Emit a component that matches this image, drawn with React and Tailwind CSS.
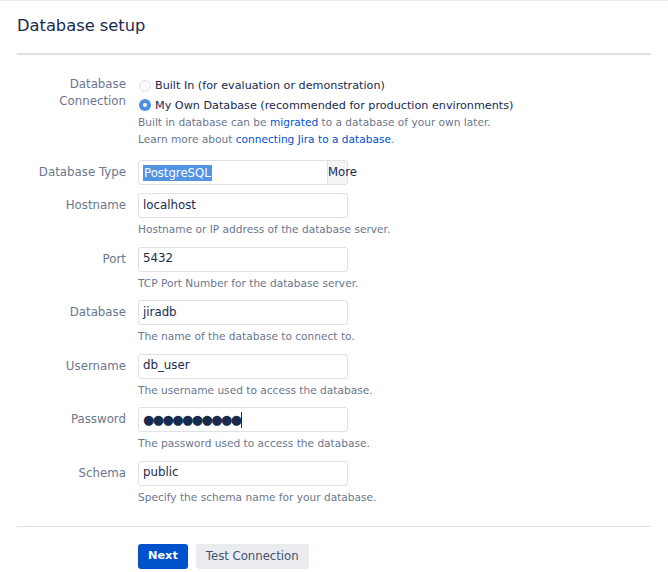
import React from "react";

const font = { fontFamily: '"DejaVu Sans", Verdana, sans-serif' };

function Field({ label, value, help, children }) {
  return (
    <div className="flex pb-[9.5px]">
      <div className="w-[109px] shrink-0 text-right text-[11.8px] leading-[25px] text-[#6b778c]">{label}</div>
      <div className="ml-[12px] flex flex-col">
        {children || (
          <div className="flex h-[25px] w-[210px] items-center rounded-[3px] border border-[#dfe1e6] bg-white px-[4px] text-[11.8px] text-[#172b4d]">
            {value}
          </div>
        )}
        <div className="mt-[3px] text-[10.6px] leading-[16px] text-[#6b778c]">{help}</div>
      </div>
    </div>
  );
}

export default function App() {
  return (
    <div className="min-h-[572px] w-[668px] border-t border-[#ebecf0] bg-white" style={font}>
      <div className="mx-[17px] border-b-2 border-[#dfe1e6] pb-[15px] pt-[13px]">
        <h1 className="text-[16.3px] leading-[24px] text-[#172b4d]">Database setup</h1>
      </div>

      <div className="mx-[17px] pt-[21px]">
        {/* Database connection */}
        <div className="flex">
          <div className="w-[109px] shrink-0 text-right text-[11.8px] leading-[17px] text-[#6b778c]">
            Database
            <br />
            Connection
          </div>
          <div className="ml-[12px] flex flex-col">
            <div className="flex h-[20px] items-center">
              <span className="ml-[1px] h-[12px] w-[12px] rounded-full border border-[#dfe1e6] bg-[#fafbfc]" />
              <span className="ml-[4px] text-[11.2px] text-[#172b4d]">Built In (for evaluation or demonstration)</span>
            </div>
            <div className="flex h-[18px] items-start pt-[3px]">
              <span className="ml-[1px] flex h-[12px] w-[12px] items-center justify-center rounded-full bg-[#4c8fe0]">
                <span className="h-[4px] w-[4px] rounded-full bg-white" />
              </span>
              <span className="ml-[4px] text-[11.2px] leading-[14px] text-[#172b4d]">My Own Database (recommended for production environments)</span>
            </div>
            <div className="text-[10.6px] leading-[17px] text-[#6b778c]">
              Built in database can be <span className="text-[#0052cc]">migrated</span> to a database of your own later.
            </div>
            <div className="text-[10.6px] leading-[17px] text-[#6b778c]">
              Learn more about <span className="text-[#0052cc]">connecting Jira to a database</span>.
            </div>
          </div>
        </div>

        {/* Database type */}
        <div className="mt-[12px] flex pb-[8px]">
          <div className="w-[109px] shrink-0 text-right text-[11.8px] leading-[25px] text-[#6b778c]">Database Type</div>
          <div className="ml-[12px] flex h-[25px] w-[210px] items-stretch rounded-[3px] border border-[#dfe1e6] bg-white">
            <div className="flex flex-1 items-center pl-[4px]">
              <span className="bg-[#5294e2] px-[1px] text-[11.7px] leading-[16px] text-white">PostgreSQL</span>
            </div>
            <div className="relative w-[20px] rounded-r-[3px] border-l border-[#dfe1e6] bg-[#f4f5f7]">
              <span className="absolute left-0 top-[3px] text-[11.7px] leading-[17px] text-[#172b4d]">More</span>
            </div>
          </div>
        </div>

        <Field label="Hostname" value="localhost" help="Hostname or IP address of the database server." />
        <Field label="Port" value="5432" help="TCP Port Number for the database server." />
        <Field label="Database" value="jiradb" help="The name of the database to connect to." />
        <Field label="Username" value="db_user" help="The username used to access the database." />
        <Field label="Password" help="The password used to access the database.">
          <div className="flex h-[25px] w-[210px] items-center rounded-[3px] border border-[#dfe1e6] bg-white px-[4px] text-[#172b4d]">
            <span className="text-[13px] tracking-[-1.6px]">●●●●●●●●●●</span>
            <span className="ml-[1px] h-[16px] w-[1px] bg-[#172b4d]" />
          </div>
        </Field>
        <Field label="Schema" value="public" help="Specify the schema name for your database." />
      </div>

      <div className="mx-[17px] mt-[12px] border-t border-[#dfe1e6]" />

      <div className="ml-[138px] mt-[17px] flex gap-[8px]">
        <button className="h-[25px] rounded-[3px] bg-[#0052cc] px-[10px] text-[11.3px] font-bold text-white">Next</button>
        <button className="h-[25px] rounded-[3px] bg-[#ebecf0] px-[10px] text-[11.7px] text-[#42526e]">Test Connection</button>
      </div>
    </div>
  );
}
